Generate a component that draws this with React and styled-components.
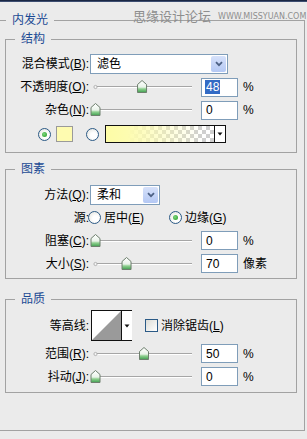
import React, { useId } from "react";
import styled, { createGlobalStyle } from "styled-components";

const Global = createGlobalStyle`
  html, body { margin: 0; padding: 0; background: #ebebeb; }
  body {
    width: 307px; height: 439px; overflow: hidden;
    font-family: "Liberation Sans", "Noto Sans CJK SC", sans-serif;
    font-size: 12px; color: #000;
  }
`;

const Page = styled.div`
  position: relative;
  width: 307px;
  height: 439px;
`;

const TopBar = styled.div`
  height: 2px;
  background: linear-gradient(#1a2744 50%, #3c4d70 50%);
`;

const Watermark = styled.div`
  position: absolute;
  top: 8px;
  left: 133px;
  display: flex;
  align-items: flex-end;
  color: #8e8e8e;
  white-space: nowrap;
`;

const WmCn = styled.span`
  font-size: 13px;
  line-height: 15px;
  font-family: "Noto Sans CJK SC", sans-serif;
`;

const WmUrl = styled.span`
  font-family: "DejaVu Sans", sans-serif;
  font-size: 8px;
  line-height: 10px;
  margin-left: 7px;
  margin-bottom: 1px;
`;

const Outer = styled.fieldset`
  margin: 11px 2px 0 -3px;
  padding: 5px 7px 37px 7px;
  border: 1px solid #a2a2a2;
  min-width: 0;
`;

const Legend = styled.legend`
  padding: 0 6px;
  margin-left: ${(p) => p.$ml}px;
  color: #1b4a94;
  font-size: 12px;
  line-height: 14px;
  height: 14px;
`;

const Group = styled.fieldset`
  margin: ${(p) => p.$mt}px 0 0 0;
  padding: ${(p) => p.$pt}px 0 ${(p) => p.$pb}px 0;
  border: 1px solid #a2a2a2;
  min-width: 0;
`;

const Row = styled.div`
  display: flex;
  align-items: center;
  height: ${(p) => p.$h || 22}px;
  margin-top: ${(p) => p.$mt || 0}px;
  white-space: nowrap;
`;

const Label = styled.div`
  width: 83px;
  flex: none;
  text-align: right;
  line-height: 14px;
`;

const U = styled.span`
  text-decoration: underline;
`;

const Mn = ({ k }) => (
  <>
    (<U>{k}</U>)
  </>
);

const Select = styled.div`
  margin-left: 1px;
  width: ${(p) => p.$w}px;
  height: 20px;
  box-sizing: border-box;
  border: 1px solid #7f9db9;
  background: #fff;
  display: flex;
  align-items: center;
  padding: 1px;
  padding-left: 6px;
`;

const SelectText = styled.span`
  flex: 1;
  line-height: 14px;
`;

const SelectButton = styled.span`
  width: 15px;
  height: 16px;
  border-radius: 2px;
  background: linear-gradient(#d6e1fa, #b4c8f4);
  display: flex;
  align-items: center;
  justify-content: center;
`;

const SliderBox = styled.div`
  width: 112px;
  height: 22px;
  flex: none;
  display: flex;
`;

const Field = styled.div`
  width: 37px;
  height: 19px;
  box-sizing: border-box;
  border: 1px solid #7f9db9;
  background: #fff;
  padding-left: 4px;
  display: flex;
  align-items: center;
  flex: none;
  line-height: 14px;
`;

const Selected = styled.span`
  background: #316ac5;
  color: #fff;
  padding: 0 1px;
  margin-left: -1px;
`;

const Unit = styled.span`
  margin-left: 5px;
  line-height: 14px;
`;

const Radio = styled.span`
  width: 13px;
  height: 13px;
  box-sizing: border-box;
  border-radius: 50%;
  border: 1px solid #2b5a86;
  background: radial-gradient(circle at 60% 60%, #ffffff 30%, #dfdfd9 100%);
  margin-left: ${(p) => p.$ml || 0}px;
  flex: none;
  display: flex;
  align-items: center;
  justify-content: center;
  &::after {
    content: "";
    width: 5px;
    height: 5px;
    border-radius: 50%;
    background: ${(p) => (p.$on ? "radial-gradient(circle at 40% 40%, #7fd67f, #1f9a1f)" : "transparent")};
  }
`;

const OptText = styled.span`
  margin-left: ${(p) => p.$ml || 3}px;
  line-height: 14px;
`;

const Swatch = styled.span`
  width: 17px;
  height: 16px;
  box-sizing: border-box;
  border: 1px solid #9a9a9a;
  background: #fefbb0;
  margin-left: 5px;
  flex: none;
`;

const GradientBox = styled.div`
  width: 121px;
  height: 18px;
  box-sizing: border-box;
  border: 1px solid #111;
  margin-left: 6px;
  display: flex;
  flex: none;
`;

const GradientFill = styled.div`
  flex: 1;
  background-image: linear-gradient(to right, #fdfca6 0%, #fdfcb0 20%, rgba(253, 252, 176, 0) 90%),
    conic-gradient(#cfcfcf 25%, #ffffff 0 50%, #cfcfcf 0 75%, #ffffff 0);
  background-size: 100% 100%, 8px 8px;
`;

const ArrowPart = styled.div`
  width: ${(p) => p.$w}px;
  border-left: 1px solid #111;
  background: #fff;
  display: flex;
  align-items: center;
  justify-content: center;
  flex: none;
`;

const ContourBox = styled.div`
  margin-left: 2px;
  width: 41px;
  height: 31px;
  box-sizing: border-box;
  border: 1px solid #111;
  display: flex;
  flex: none;
`;

const ContourPreview = styled.div`
  width: 29px;
  background: #fff;
  display: flex;
`;

const Check = styled.span`
  width: 13px;
  height: 13px;
  box-sizing: border-box;
  border: 1px solid #2b5a86;
  background: linear-gradient(135deg, #dcdcd6, #ffffff);
  margin-left: 13px;
  flex: none;
`;

const Chevron = () => (
  <svg width="8" height="6" viewBox="0 0 8 6">
    <path d="M1 1.2 L4 4.2 L7 1.2" fill="none" stroke="#4d6185" strokeWidth="1.8" />
  </svg>
);

const DownTri = () => (
  <svg width="6" height="4" viewBox="0 0 6 4">
    <path d="M0.5 0.5 H5.5 L3 3.5 Z" fill="#111" />
  </svg>
);

function Slider({ pos }) {
  const id = useId();
  const cx = 6.5 + pos * 97;
  return (
    <SliderBox>
      <svg width="112" height="22" viewBox="0 0 112 22">
        <defs>
          <linearGradient id={id} x1="0" y1="0" x2="0" y2="1">
            <stop offset="0" stopColor="#ffffff" />
            <stop offset="0.55" stopColor="#e9f3e9" />
            <stop offset="0.7" stopColor="#8fd08f" />
            <stop offset="1" stopColor="#3f9f4f" />
          </linearGradient>
        </defs>
        <line x1="6" y1="10.5" x2="103" y2="10.5" stroke="#a6a6a6" />
        <line x1="6" y1="11.5" x2="103" y2="11.5" stroke="#ffffff" />
        <circle cx="6.5" cy="11" r="1.6" fill="#f4f4f4" stroke="#a6a6a6" strokeWidth="0.8" />
        <path
          d={`M${cx - 4.5} 16.5 V8.5 L${cx} 4.5 L${cx + 4.5} 8.5 V16.5 Z`}
          fill={`url(#${id})`}
          stroke="#6d7f6d"
        />
      </svg>
    </SliderBox>
  );
}

function SliderRow({ label, k, pos, value, unit = "%", selected, h, mt }) {
  return (
    <Row $h={h} $mt={mt}>
      <Label>
        {label}
        <Mn k={k} />:
      </Label>
      <Slider pos={pos} />
      <Field>{selected ? <Selected>{value}</Selected> : value}</Field>
      <Unit>{unit}</Unit>
    </Row>
  );
}

export default function App() {
  return (
    <Page>
      <Global />
      <TopBar />
      <Outer>
        <Legend $ml={1}>内发光</Legend>

        <Group $mt={0} $pt={7} $pb={7}>
          <Legend $ml={9}>结构</Legend>
          <Row>
            <Label>
              混合模式<Mn k="B" />:
            </Label>
            <Select $w={138}>
              <SelectText>滤色</SelectText>
              <SelectButton>
                <Chevron />
              </SelectButton>
            </Select>
          </Row>
          <SliderRow label="不透明度" k="O" pos={0.48} value="48" selected mt={1} />
          <SliderRow label="杂色" k="N" pos={0} value="0" mt={1} />
          <Row $mt={2}>
            <Radio $on $ml={32} />
            <Swatch />
            <Radio $ml={13} />
            <GradientBox>
              <GradientFill />
              <ArrowPart $w={10}>
                <DownTri />
              </ArrowPart>
            </GradientBox>
          </Row>
        </Group>

        <Group $mt={9} $pt={7} $pb={3}>
          <Legend $ml={9}>图素</Legend>
          <Row $h={23}>
            <Label>
              方法<Mn k="Q" />:
            </Label>
            <Select $w={70}>
              <SelectText>柔和</SelectText>
              <SelectButton>
                <Chevron />
              </SelectButton>
            </Select>
          </Row>
          <Row $h={23}>
            <Label>源:</Label>
            <Radio $ml={-1} />
            <OptText $ml={3}>
              居中<Mn k="E" />
            </OptText>
            <Radio $on $ml={25} />
            <OptText $ml={3}>
              边缘<Mn k="G" />
            </OptText>
          </Row>
          <SliderRow label="阻塞" k="C" pos={0} value="0" h={23} />
          <SliderRow label="大小" k="S" pos={0.32} value="70" unit="像素" h={23} />
        </Group>

        <Group $mt={13} $pt={3} $pb={4}>
          <Legend $ml={9}>品质</Legend>
          <Row $h={33}>
            <Label>等高线:</Label>
            <ContourBox>
              <ContourPreview>
                <svg width="29" height="29" viewBox="0 0 29 29">
                  <path d="M0 29 L29 0 V29 Z" fill="#9a9a9a" />
                </svg>
              </ContourPreview>
              <ArrowPart $w={10}>
                <DownTri />
              </ArrowPart>
            </ContourBox>
            <Check />
            <OptText $ml={3}>
              消除锯齿<Mn k="L" />
            </OptText>
          </Row>
          <SliderRow label="范围" k="R" pos={0.5} value="50" h={23} />
          <SliderRow label="抖动" k="J" pos={0} value="0" h={23} />
        </Group>
      </Outer>
      <Watermark>
        <WmCn>思缘设计论坛</WmCn>
        <WmUrl>WWW.MISSYUAN.COM</WmUrl>
      </Watermark>
    </Page>
  );
}
